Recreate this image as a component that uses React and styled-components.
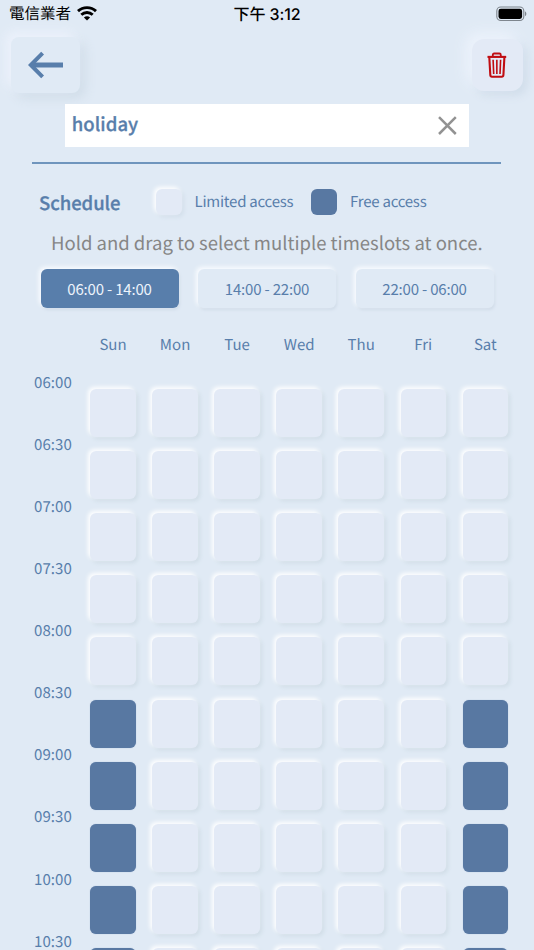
import React from "react";
import styled, { createGlobalStyle } from "styled-components";

const GlobalStyle = createGlobalStyle`
  *, *::before, *::after { box-sizing: border-box; }
  html, body { margin: 0; background: #e0eaf5; }
  body { overflow: hidden; }
  button { font: inherit; letter-spacing: inherit; border: 0; padding: 0; margin: 0; }
`;

const blue = "#587eab";
const slate = "#5878a2";

const Screen = styled.div`
  width: 534px;
  height: 950px;
  overflow: hidden;
  display: flex;
  flex-direction: column;
  background: #e0eaf5;
  color: ${blue};
  font-family: "Noto Sans CJK TC", "Noto Sans", sans-serif;
  text-rendering: geometricPrecision;
`;

const StatusBar = styled.div`
  height: 28px;
  flex: none;
  display: grid;
  grid-template-columns: 1fr auto 1fr;
  align-items: center;
  padding: 0 7px 0 9px;
  color: #000;
  font-family: Inter, "Noto Sans CJK TC", sans-serif;
  font-size: 15.5px;
  line-height: 28px;
`;

const Carrier = styled.div`
  display: flex;
  align-items: center;
  gap: 6px;
  font-weight: 400;
`;

const Clock = styled.div`
  font-size: 16px;
  font-weight: 500;
  letter-spacing: -0.1px;
  margin-right: 2px;
`;

const Battery = styled.svg`
  justify-self: end;
`;

const TopBar = styled.header`
  height: 75px;
  flex: none;
  display: flex;
  justify-content: space-between;
  align-items: flex-start;
  padding: 9px 11px 0;
`;

const BackButton = styled.button`
  width: 69px;
  height: 56px;
  border-radius: 8px;
  display: grid;
  place-items: center;
  background: #e0eaf5;
  box-shadow: -5px -5px 12px #edf2fc, 5px 5px 12px #cfdce8;
`;

const DeleteButton = styled.button`
  width: 51px;
  height: 52px;
  margin-top: 2px;
  border-radius: 12px;
  display: grid;
  place-items: center;
  background: #e3eaf6;
  box-shadow: -6px -6px 14px #edf3fc, 4px 4px 10px #cedbe9;
`;

const NameField = styled.div`
  width: 403.5px;
  height: 43.5px;
  flex: none;
  margin: 0.5px 0 0 65.3px;
  padding: 0 12px 0 6.5px;
  display: flex;
  align-items: center;
  justify-content: space-between;
  background: #fff;
`;

const NameText = styled.span`
  font-size: 18.5px;
  font-weight: 500;
  -webkit-text-stroke: 0.3px currentColor;
  letter-spacing: 0.05px;
  line-height: 40px;
  height: 43px;
`;

const Divider = styled.hr`
  width: 469px;
  height: 1.5px;
  flex: none;
  border: 0;
  margin: 15px 0 0 32.4px;
  background: #6f95bd;
`;

const Legend = styled.section`
  height: 40px;
  flex: none;
  display: flex;
  align-items: center;
  margin-top: 18.5px;
  padding-left: 39px;
`;

const Title = styled.h2`
  width: 116.5px;
  height: 40px;
  margin: 0;
  font-size: 18.5px;
  font-weight: 500;
  -webkit-text-stroke: 0.3px currentColor;
  letter-spacing: -0.05px;
  line-height: 42px;
`;

const Swatch = styled.span`
  width: 26px;
  height: 26px;
  border-radius: 6px;
  background: ${(p) => (p.$free ? slate : "#e3eaf6")};
  box-shadow: ${(p) => (p.$free ? "none" : "-2px -2px 4px #fff, 2px 2px 4px #d2deea")};
`;

const LegendLabel = styled.span`
  width: ${(p) => p.$width}px;
  padding-left: 13px;
  font-size: 15px;
  letter-spacing: -0.23px;
  line-height: 40.5px;
  height: 40px;
  white-space: nowrap;
`;

const Hint = styled.p`
  height: 34px;
  flex: none;
  margin: 4px 0 0 51px;
  color: #868686;
  font-size: 18.5px;
  letter-spacing: 0;
  line-height: 34px;
  white-space: nowrap;
`;

const Ranges = styled.nav`
  flex: none;
  display: grid;
  grid-template-columns: repeat(3, 138px);
  column-gap: 19.5px;
  margin: 8.5px 0 0 40.5px;
`;

const RangeButton = styled.button`
  && {
    height: 39px;
    border-radius: 6px;
    color: ${(p) => (p.$active ? "#edf4fc" : blue)};
    background: ${(p) => (p.$active ? blue : "#e0eaf5")};
    box-shadow: -2px -2px 4px #fafcff, 1px 2px 3px #d0dce9;
    font-size: 15px;
    letter-spacing: -0.18px;
    line-height: 39px;
  }
`;

const Grid = styled.section`
  flex: none;
  display: grid;
  grid-template-columns: 57px repeat(7, 62.05px);
  grid-template-rows: 74px;
  grid-auto-rows: 62.12px;
  margin: 7.5px 0 0 25px;
`;

const DayLabel = styled.div`
  padding-top: 15px;
  text-align: center;
  font-size: 15px;
  letter-spacing: 0;
  line-height: 30px;
`;

const TimeLabel = styled.time`
  margin-top: -21.3px;
  padding-left: 9px;
  font-size: 15px;
  letter-spacing: 0.1px;
  line-height: 30px;
`;

const Slot = styled.button`
  justify-self: center;
  width: 45.5px;
  height: 48px;
  border-radius: 6px;
  background: ${(p) => (p.$free ? slate : "#e3eaf6")};
  box-shadow: ${(p) => (p.$free ? "0 0 1px #93aaca" : "-2px -2px 4px #fff, 2px 2px 4px #cfdce6")};
`;

const days = ["Sun", "Mon", "Tue", "Wed", "Thu", "Fri", "Sat"];
const times = ["06:00", "06:30", "07:00", "07:30", "08:00", "08:30", "09:00", "09:30", "10:00", "10:30"];
const ranges = ["06:00 - 14:00", "14:00 - 22:00", "22:00 - 06:00"];
const isFree = (day, row) => (day === 0 || day === 6) && row >= 5;

function WifiIcon() {
  return (
    <svg width="20" height="17" viewBox="0 0 20 17" fill="none" stroke="#000" strokeWidth="2.9">
      <path d="M1 5.1C6 0.4 14 0.4 19 5.1" />
      <path d="M4.3 8.8C7.6 5.8 12.4 5.8 15.7 8.8" />
      <path d="M10 14.6 6.9 11.5C8.7 9.9 11.3 9.9 13.1 11.5Z" fill="#000" stroke="none" />
    </svg>
  );
}

function BatteryIcon() {
  return (
    <Battery width="31" height="16" viewBox="0 0 31 16">
      <rect x="0.8" y="1" width="27" height="13.5" rx="4" fill="none" stroke="#7d858d" strokeWidth="1.1" />
      <rect x="2.5" y="2.7" width="23.6" height="10.2" rx="2.3" fill="#000" />
      <path d="M29 5.5C30.8 6.2 30.8 9.4 29 10Z" fill="#7d858d" />
    </Battery>
  );
}

function BackIcon() {
  return (
    <svg width="36" height="28" viewBox="0 0 36 28" fill="none" stroke={blue}>
      <path d="M3 14H35" strokeWidth="5" />
      <path d="M14.6 2.2 2.8 14 14.6 25.8" strokeWidth="4" />
    </svg>
  );
}

function TrashIcon() {
  return (
    <svg width="21" height="26" viewBox="0 0 21 26" fill="none" stroke="#c00d12" strokeWidth="1.8">
      <path d="M0.5 4.9H19.2" strokeWidth="2.1" />
      <path d="M5.8 4.4V2.9Q5.8 1.5 7.2 1.5H12.4Q13.8 1.5 13.8 2.9V4.4" />
      <path d="M2.3 5.2 3.3 23Q3.4 24.7 5 24.7H14.7Q16.3 24.7 16.4 23L17.4 5.2" strokeWidth="2.1" />
      <path d="M6.1 7.7 6.7 22M9.85 7.7V22M13.6 7.7 13 22" strokeWidth="1.6" />
    </svg>
  );
}

function ClearIcon() {
  return (
    <svg width="19" height="20" viewBox="0 0 19 20" stroke="#929292" strokeWidth="2.5">
      <path d="M1 2.2 17.8 19M17.8 2.2 1 19" />
    </svg>
  );
}

export default function App() {
  return (
    <Screen>
      <GlobalStyle />
      <StatusBar>
        <Carrier>電信業者<WifiIcon /></Carrier>
        <Clock>下午 3:12</Clock>
        <BatteryIcon />
      </StatusBar>
      <TopBar>
        <BackButton aria-label="Back"><BackIcon /></BackButton>
        <DeleteButton aria-label="Delete"><TrashIcon /></DeleteButton>
      </TopBar>
      <NameField>
        <NameText>holiday</NameText>
        <ClearIcon />
      </NameField>
      <Divider />
      <Legend>
        <Title>Schedule</Title>
        <Swatch />
        <LegendLabel $width={129.5}>Limited access</LegendLabel>
        <Swatch $free />
        <LegendLabel $width={120}>Free access</LegendLabel>
      </Legend>
      <Hint>Hold and drag to select multiple timeslots at once.</Hint>
      <Ranges>
        {ranges.map((range, i) => (
          <RangeButton key={range} $active={i === 0}>{range}</RangeButton>
        ))}
      </Ranges>
      <Grid>
        <span />
        {days.map((day) => <DayLabel key={day}>{day}</DayLabel>)}
        {times.map((time, row) => (
          <React.Fragment key={time}>
            <TimeLabel>{time}</TimeLabel>
            {days.map((day, col) => (
              <Slot key={day} $free={isFree(col, row)} aria-label={`${day} ${time}`} />
            ))}
          </React.Fragment>
        ))}
      </Grid>
    </Screen>
  );
}
